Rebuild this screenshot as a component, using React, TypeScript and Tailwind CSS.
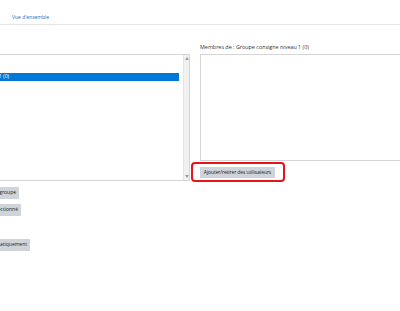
import React from 'react';

const font = { fontFamily: '"Open Sans", "Noto Sans", Arial, sans-serif' };

function Scrollbar() {
  return (
    <div className="w-[6px] bg-[#f0f0f0] border-l border-[#e5e5e5] flex flex-col justify-between items-center py-[2px]">
      <svg width="4" height="3" viewBox="0 0 4 3">
        <path d="M0 3 L2 0 L4 3 Z" fill="#a0a0a0" />
      </svg>
      <svg width="4" height="3" viewBox="0 0 4 3">
        <path d="M0 0 L2 3 L4 0 Z" fill="#a0a0a0" />
      </svg>
    </div>
  );
}

function GreyButton({ width, label }: { width: string; label: string }) {
  return (
    <div className={`${width} h-[12px] bg-[#ced4da] text-[#1d2125] text-[5px] flex items-center justify-end pr-[3px] whitespace-nowrap`}>
      {label}
    </div>
  );
}

export default function App() {
  return (
    <div className="w-[400px] h-[311px] bg-white overflow-hidden" style={font}>
      <div className="h-[25px] border-b border-[#e5e5e5] flex items-end pl-[12px] pb-[4px]">
        <span className="text-[5px] text-[#0f6cbf] leading-none">Vue d'ensemble</span>
      </div>

      <div className="flex mt-[16px]">
        <div className="w-[290px] -ml-[100px] shrink-0">
          <div className="h-[13px]" />
          <div className="h-[127px] border border-[#d5d5d5] flex">
            <div className="flex-1 pt-[18px] pr-[4px]">
              <div className="h-[8px] bg-[#0078d7] text-white text-[5px] flex items-center justify-end pr-[170px] whitespace-nowrap">
                Groupe consigne niveau 1 (0)
              </div>
            </div>
            <Scrollbar />
          </div>
          <div className="mt-[6px] flex flex-col gap-[5px]">
            <GreyButton width="w-[119px]" label="Modifier les réglages du groupe" />
            <GreyButton width="w-[121px]" label="Supprimer le groupe sélectionné" />
            <div className="h-[13px]" />
            <GreyButton width="w-[130px]" label="Créer des groupes automatiquement" />
          </div>
        </div>

        <div className="ml-[10px] w-[220px] shrink-0">
          <div className="h-[13px] text-[5.4px] text-[#333] leading-none pt-[4px] whitespace-nowrap">
            Membres de : Groupe consigne niveau 1 (0)
          </div>
          <div className="h-[107px] border border-[#d5d5d5]" />
          <div className="mt-[6px] relative w-[75px]">
            <div className="h-[11px] bg-[#ced4da] text-[#1d2125] text-[5px] flex items-center justify-center whitespace-nowrap tracking-[-0.1px]">
              Ajouter/retirer des utilisateurs
            </div>
            <span className="absolute -left-[9px] -right-[10px] -top-[5px] -bottom-[4px] border-2 border-[#e8141b] rounded-[4px]" />
          </div>
        </div>
      </div>
    </div>
  );
}
